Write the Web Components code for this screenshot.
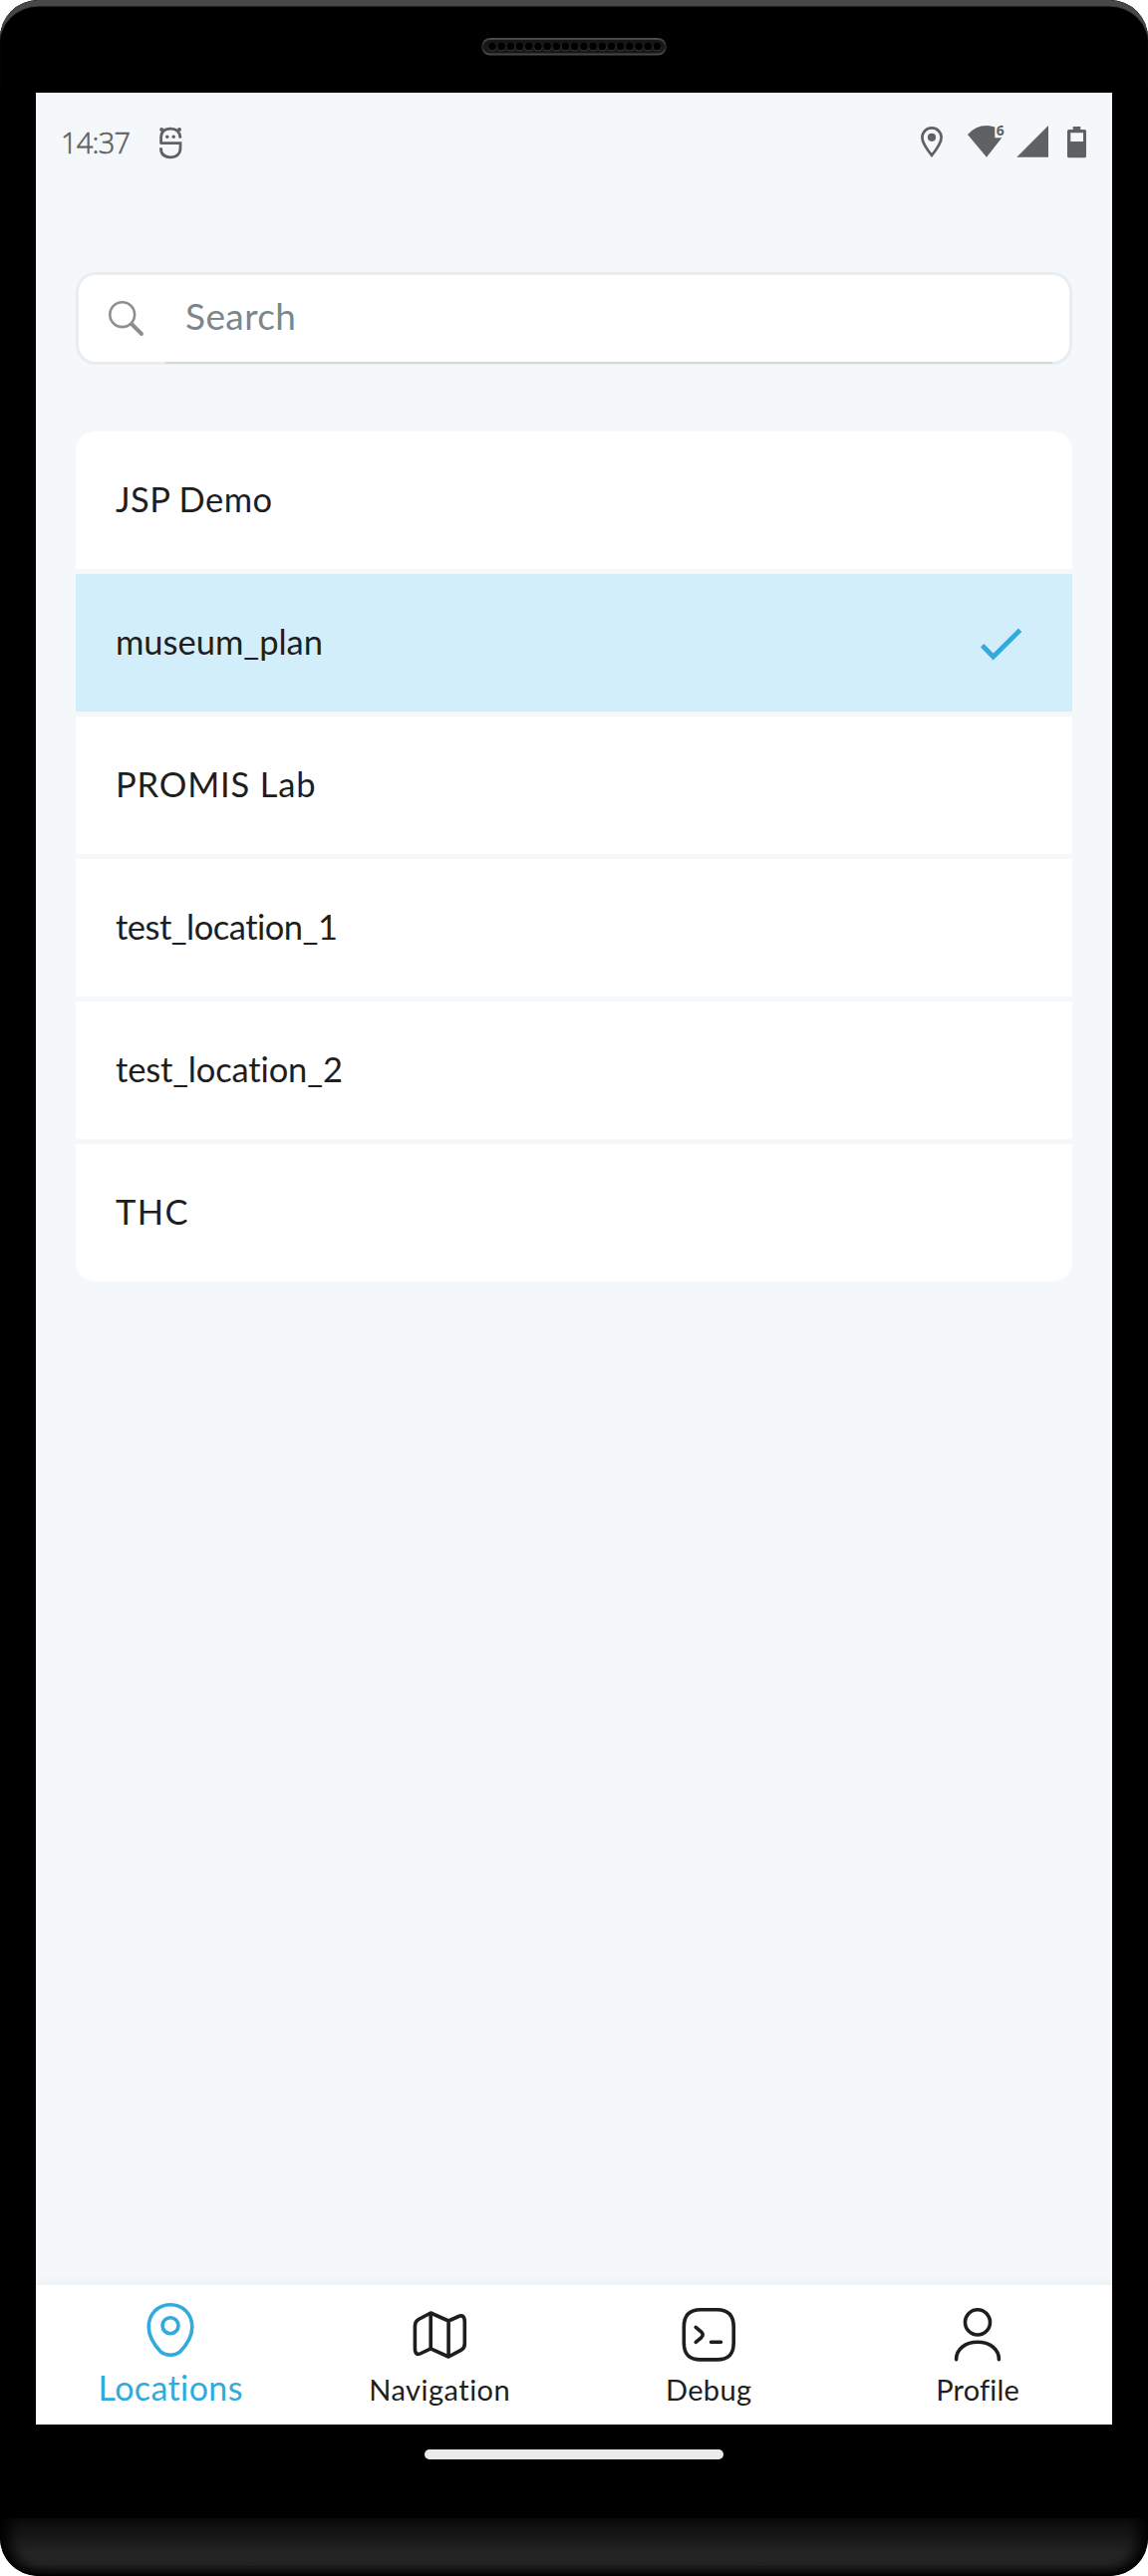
<!DOCTYPE html>
<html lang="en"><head><meta charset="utf-8"><title>Locations</title>
<style>html,body{margin:0;background:#fff}body{font-family:Lato,"Noto Sans",sans-serif;color:#1e1e1e}</style></head>
<body>
<phone-frame>
  <status-bar></status-bar>
  <search-field></search-field>
  <location-list>
    <location-row fit="153">JSP Demo</location-row>
    <location-row fit="204" selected>museum_plan</location-row>
    <location-row fit="196.500">PROMIS Lab</location-row>
    <location-row fit="219.500">test_location_1</location-row>
    <location-row fit="224.500">test_location_2</location-row>
    <location-row fit="68.500">THC</location-row>
  </location-list>
  <tab-bar slot="tabs">
    <tab-item active fit="141.500" label="Locations"><svg width="50" height="56" viewBox="0 0 50 56"><path d="M25 2.8C12.5 2.8 3.2 12 3.2 25C3.2 37 10.5 45 15.5 50.2C20.5 54.2 29.5 54.2 34.5 50.2C39.5 45 46.8 37 46.8 25C46.8 12 37.5 2.8 25 2.8Z"/><circle cx="25" cy="23.7" r="8"/></svg></tab-item>
    <tab-item fit="138" label="Navigation"><svg width="56" height="56" viewBox="0 -3 56 56"><path d="M19.2 3L7 9.5Q3.4 11.5 3.4 16V38.5Q3.4 46.5 9.5 43.5L19.2 38.8L37.1 47L49.5 40.3Q53.3 38.3 53.3 34V12Q53.3 4 47.2 6.5L37.1 11ZM19.2 3V38.8M37.1 11V47"/></svg></tab-item>
    <tab-item fit="82" label="Debug"><svg width="56" height="56" viewBox="0 0 56 56"><path d="M20 2.8H36.5C48 2.8 53.2 8.5 53.2 20V36C53.2 47.5 48 52.9 36.5 52.9H20C8.500 52.9 3.300 47.5 3.300 36V20C3.300 8.500 8.500 2.800 20 2.800ZM15.200 20.300L20.500 24.800Q23.800 28 20.500 31L15.200 35.300M30.500 35.300H40.500"/></svg></tab-item>
    <tab-item fit="79" label="Profile"><svg width="50" height="56" viewBox="0 0 50 56"><ellipse cx="25" cy="15.400" rx="12.500" ry="12.600"/><path d="M3.600 52.800C3.600 42 13 35.300 25 35.300S46.400 42 46.400 52.800"/></svg></tab-item>
  </tab-bar>
</phone-frame>
<script>
// Spreads the letters so that the run of text takes the given width.
function fitText(el, width) {
  const n = [...el.dataset.text || el.textContent].length;
  el.style.letterSpacing = '0px';
  const extra = (width - el.getBoundingClientRect().width) / (n - 1);
  el.style.letterSpacing = extra + 'px';
  el.style.marginRight = -extra + 'px';
}
class Base extends HTMLElement {
  constructor() { super(); this.attachShadow({ mode: 'open' }); }
  connectedCallback() { this.shadowRoot.innerHTML = this.render(); this.ready && this.ready(); }
}
customElements.define('phone-frame', class extends Base {
  render() {
    let holes = '';
    for (let i = 0; i < 19; i++) {
      const x = 11 + i * 9.19;
      holes += `<circle cx="${x}" cy="9.2" r="4.1" fill="#454545"/><circle cx="${x}" cy="8.600" r="3.900" fill="#000"/>`;
    }
    return `<style>
:host{display:flex;flex-direction:column;width:1152px;height:2585px;background:#000;border-radius:38px;overflow:hidden}
.top{height:93px;box-sizing:border-box;padding-top:38px;display:flex;justify-content:center;align-items:flex-start;border-radius:38px 38px 0 0;background:#000;box-shadow:inset 0 7px 1px -0.500px #484848}
.screen{height:2340px;margin:0 36px;background:#f4f8fb;display:flex;flex-direction:column}
.content{flex:1;display:flex;flex-direction:column}
.home{height:94px;display:flex;justify-content:center;padding-top:25px;box-sizing:border-box}
.home i{width:300px;height:10px;border-radius:5px;background:#ebebeb}
.chin{height:58px;border-radius:0 0 38px 38px;background:linear-gradient(#0c0c0c,#141414 25%,#252525 62%,#232323 80%,#111 96%,#000);box-shadow:inset 14px -3px 14px -5px #000,inset -14px -3px 14px -5px #000}
</style>
<div class="top"><svg width="186" height="18" viewBox="0 0 186 18"><defs><linearGradient id="g" x2="0" y2="1"><stop offset="0" stop-color="#4a4a4a"/><stop offset=".5" stop-color="#202020"/><stop offset="1" stop-color="#484848"/></linearGradient></defs><rect x="1" y="1" width="184" height="15.500" rx="7.750" fill="#171717" stroke="url(#g)" stroke-width="2"/>${holes}</svg></div>
<div class="screen"><div class="content"><slot></slot></div><slot name="tabs"></slot></div>
<div class="home"><i></i></div><div class="chin"></div>`;
  }
});
customElements.define('status-bar', class extends Base {
  render() {
    return `<style>
:host{display:flex;height:180px;box-sizing:border-box;padding:33px 25px 0 25px;align-items:flex-start;color:#5f6163}
.time{font:300 29px/36px "Open Sans",sans-serif;-webkit-text-stroke:.6px currentColor;width:98px;box-sizing:border-box;white-space:nowrap;margin-top:-1px}
.right{margin-left:auto;display:flex}
svg{display:block}
</style>
<div class="time"><span>14:37</span></div>
<svg style="margin-top:1px" width="24" height="34" fill="none" stroke="currentColor" stroke-width="2.800"><path d="M2.600 17.500V11.500C2.600 5.500 6 2.200 12.200 2.200S21.600 5.500 22 11.700M2.400 16.700H22V21.500C22 27.500 18 30.800 12 30.800S2.400 27.500 2.400 21.300"/><g fill="currentColor" stroke="none"><circle cx="3.200" cy="3" r="2"/><circle cx="21" cy="3" r="2"/><circle cx="8.800" cy="10.300" r="1.700"/><circle cx="15.200" cy="10.300" r="1.700"/></g></svg>
<div class="right">
<svg style="margin:1px 25px 0 0" width="22" height="31" fill="none" stroke="currentColor" stroke-width="2.700"><path d="M11 1.400C5.600 1.400 1.400 5.600 1.400 11C1.400 17 11 28.800 11 28.800S20.600 17 20.600 11C20.600 5.600 16.400 1.400 11 1.400Z"/><circle cx="11" cy="10.800" r="4.100" fill="currentColor" stroke="none"/></svg>
<svg style="margin-right:11px;overflow:visible" width="38" height="32" fill="currentColor"><path d="M0 9Q8 0 19 0Q23.500 0 27.300 1.600V12.300H34.300L19 31.700Z"/><text x="28.800" y="10.400" font-family="Open Sans" font-weight="700" font-size="14">6</text></svg>
<svg style="margin-right:19px" width="32" height="32" fill="currentColor"><path d="M0.300 31.700L32 0V31.700Z"/></svg>
<svg style="margin-top:1px" width="20" height="32" fill="currentColor"><path fill-rule="evenodd" d="M5.700 0H13.300V3H17.500Q19 3 19 4.500V29.800Q19 31.300 17.500 31.300H1.500Q0 31.300 0 29.800V4.500Q0 3 1.500 3H5.700ZM3.300 6.300V15H16V6.300Z"/></svg>
</div>`;
  }
  ready() { fitText(this.shadowRoot.querySelector('span'), 70); }
});
customElements.define('search-field', class extends Base {
  render() {
    return `<style>
:host{display:flex;margin:0 40px;height:93px;box-sizing:border-box;border:3px solid #e9edf0;border-radius:20px;background:#fff;position:relative;padding:25px 0 0 29px;color:#7b868d}
.text{font-size:37px;line-height:44px;margin:-6px 0 0 40px;white-space:nowrap}
.line{position:absolute;left:87px;right:17px;bottom:-2px;height:2px;background:#d4d9dc}
</style><svg width="38" height="38" fill="none" stroke="#8e8d92" stroke-linecap="round"><circle cx="14.700" cy="14.700" r="12.400" stroke-width="2.600"/><path d="M24.300 24.300L34 34" stroke-width="4"/></svg>
<span class="text">Search</span><i class="line"></i>`;
  }
  ready() { fitText(this.shadowRoot.querySelector('span'), 111); }
});
customElements.define('location-list', class extends Base {
  render() { return `<style>:host{display:flex;flex-direction:column;gap:5px;margin:67px 40px 0;border-radius:20px;overflow:hidden}</style><slot></slot>`; }
});
customElements.define('location-row', class extends Base {
  render() {
    return `<style>
:host{display:flex;height:138px;box-sizing:border-box;background:#fff;padding:0 50px 0 40px;align-items:center;justify-content:space-between}
:host([selected]){background:#d3eefb}
.t{font-size:34.500px;line-height:44px;white-space:nowrap;position:relative;top:-1px}
svg{margin-top:2px}
</style><span class="t"><slot></slot></span>${this.hasAttribute('selected') ? '<svg width="42" height="34" fill="none" stroke="#31abdc" stroke-width="4.800"><path d="M1.700 18.700L12.700 30L39.600 3.200"/></svg>' : ''}`;
  }
  ready() {
    const t = this.shadowRoot.querySelector('.t');
    t.dataset.text = this.textContent;
    fitText(t, +this.getAttribute('fit') + 4);
  }
});
customElements.define('tab-bar', class extends Base {
  render() { return `<style>:host{display:grid;grid-template-columns:repeat(4,1fr);height:140px;background:#fff;box-shadow:0 -1px 8px #dfe6ea99;clip-path:inset(-12px 0 0 0)}</style><slot></slot>`; }
});
customElements.define('tab-item', class extends Base {
  render() {
    return `<style>
:host{display:flex;flex-direction:column;align-items:center;padding-top:22px;color:#1e1e1e;font-size:29px}
:host([active]){color:#31abdc;font-size:34px;padding-top:17px}
::slotted(svg){display:block;fill:none;stroke:currentColor;stroke-width:3.600;stroke-linecap:round;stroke-linejoin:round}
span{line-height:40px;margin-top:7px;white-space:nowrap}
:host([active]) span{margin-top:10px}
</style><slot></slot><span>${this.getAttribute('label')}</span>`;
  }
  ready() { fitText(this.shadowRoot.querySelector('span'), +this.getAttribute('fit') + 4); }
});
</script>
</body></html>
